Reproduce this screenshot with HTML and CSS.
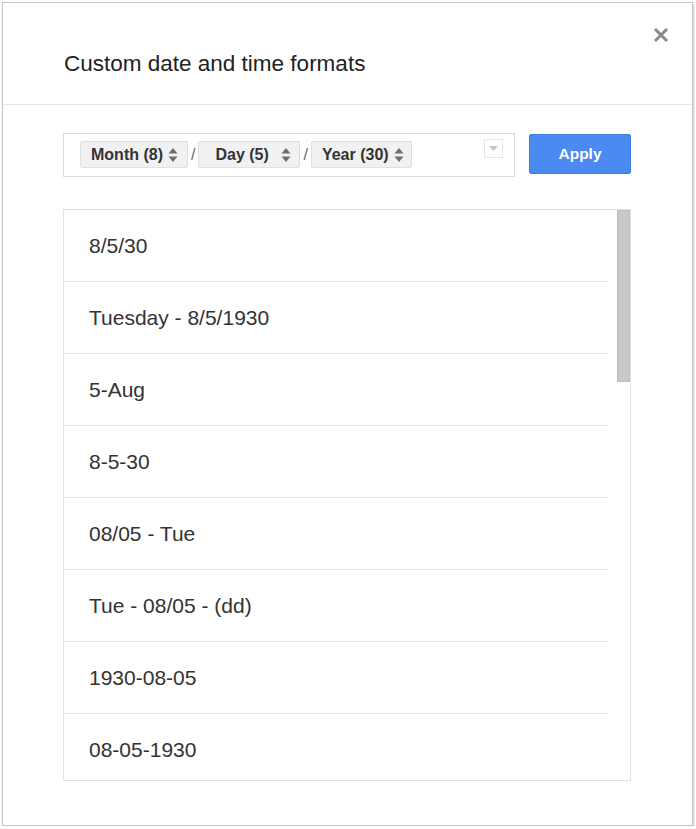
FILE: index.html
```html
<!DOCTYPE html>
<html lang="en">
<head>
<meta charset="utf-8">
<title>Custom date and time formats</title>
<link rel="stylesheet" href="styles.css">
</head>
<body>
<div class="dialog">
  <div class="header">
    <h1 class="title">Custom date and time formats</h1>
    <button class="close" aria-label="Close">
      <svg width="16" height="16" viewBox="0 0 16 16"><path d="M2 2 L14 14 M14 2 L2 14" stroke="#8a8a8a" stroke-width="3" stroke-linecap="butt"/></svg>
    </button>
  </div>
  <div class="content">
    <div class="format-row">
      <div class="format-input">
        <div class="chips">
          <span class="chip chip-month">Month (8)<svg class="spin" width="10" height="16" viewBox="0 0 10 16"><path d="M5 1 L9.5 6.5 L0.5 6.5 Z M0.5 9.5 L9.5 9.5 L5 15 Z" fill="#6e6e6e"/></svg></span>
          <span class="sep">/</span>
          <span class="chip chip-day">Day (5)<svg class="spin" width="10" height="16" viewBox="0 0 10 16"><path d="M5 1 L9.5 6.5 L0.5 6.5 Z M0.5 9.5 L9.5 9.5 L5 15 Z" fill="#6e6e6e"/></svg></span>
          <span class="sep">/</span>
          <span class="chip chip-year">Year (30)<svg class="spin" width="10" height="16" viewBox="0 0 10 16"><path d="M5 1 L9.5 6.5 L0.5 6.5 Z M0.5 9.5 L9.5 9.5 L5 15 Z" fill="#6e6e6e"/></svg></span>
        </div>
        <span class="drop">
          <svg width="9" height="5" viewBox="0 0 9 5"><path d="M0 0 L9 0 L4.5 5 Z" fill="#c4c4c4"/></svg>
        </span>
      </div>
      <button class="apply">Apply</button>
    </div>
    <div class="list">
      <div class="items">
        <div class="item">8/5/30</div>
        <div class="item">Tuesday - 8/5/1930</div>
        <div class="item">5-Aug</div>
        <div class="item">8-5-30</div>
        <div class="item">08/05 - Tue</div>
        <div class="item">Tue - 08/05 - (dd)</div>
        <div class="item">1930-08-05</div>
        <div class="item">08-05-1930</div>
      </div>
      <div class="scrollbar"><div class="thumb"></div></div>
    </div>
  </div>
</div>
</body>
</html>
```
FILE: styles.css
```css
html, body {
  margin: 0;
  padding: 0;
  background: #ffffff;
}
body {
  padding: 2px 3px 0 2px;
  font-family: "Liberation Sans", Arial, sans-serif;
}
.dialog {
  width: 691px;
  height: 824px;
  box-sizing: border-box;
  border: 1px solid #c4c4c4;
  background: #fff;
  box-shadow: 1px 2px 2px rgba(0,0,0,0.22);
  display: flex;
  flex-direction: column;
}
.header {
  height: 102px;
  box-sizing: border-box;
  border-bottom: 1px solid #e6e6e6;
  display: flex;
  justify-content: space-between;
  align-items: flex-start;
  padding: 24px 23px 0 61px;
}
.title {
  margin: 24px 0 0 0;
  font-size: 22.5px;
  line-height: 26px;
  font-weight: normal;
  color: #222;
}
.close {
  border: 0;
  background: none;
  padding: 0;
  width: 16px;
  height: 16px;
  display: block;
}
.close svg { display: block; }
.content {
  padding: 28px 0 0 60px;
}
.format-row {
  display: flex;
  align-items: flex-start;
  gap: 14px;
}
.format-input {
  width: 452px;
  height: 44px;
  box-sizing: border-box;
  border: 1px solid #dadada;
  display: flex;
  justify-content: space-between;
  align-items: flex-start;
  padding: 0 11px 0 16px;
}
.chips {
  display: flex;
  align-items: center;
  margin-top: 7px;
}
.chip {
  height: 27px;
  box-sizing: border-box;
  background: #f1f1f1;
  border: 1px solid #e0e0e0;
  border-radius: 2px;
  display: flex;
  align-items: center;
  font-size: 16px;
  font-weight: bold;
  color: #333;
  white-space: nowrap;
}
.spin { display: block; margin-left: 5px; }
.chip-month { width: 108px; padding-left: 10px; }
.chip-day { width: 102px; padding-left: 16px; justify-content: space-between; padding-right: 8px; }
.chip-year { width: 101px; padding-left: 10px; }
.sep {
  font-size: 16px;
  color: #666;
  margin: 0 3px 0 3px;
  line-height: 1;
}
.drop {
  margin-top: 5px;
  width: 19px;
  height: 19px;
  box-sizing: border-box;
  border: 1px solid #e6e6e6;
  display: flex;
  align-items: center;
  justify-content: center;
}
.drop svg { display: block; }
.apply {
  margin-top: 1px;
  width: 102px;
  height: 40px;
  box-sizing: border-box;
  background: #4a8af1;
  border: 1px solid #3f7fe6;
  border-radius: 2px;
  color: #fff;
  font-family: "Liberation Sans", Arial, sans-serif;
  font-size: 15.5px;
  font-weight: bold;
  padding: 0;
}
.list {
  margin-top: 32px;
  width: 568px;
  height: 572px;
  box-sizing: border-box;
  border: 1px solid #e2e2e2;
  display: grid;
  grid-template-columns: 1fr 22px;
  overflow: hidden;
}
.items {
  display: flex;
  flex-direction: column;
  margin-left: 1px;
}
.item {
  flex: none;
  height: 71px;
  border-bottom: 1px solid #e6e6e6;
  display: flex;
  align-items: center;
  padding-left: 24px;
  font-size: 21px;
  color: #333;
}
.scrollbar {
  display: flex;
  justify-content: flex-end;
  align-items: flex-start;
}
.thumb {
  width: 13px;
  height: 172px;
  box-sizing: border-box;
  background: #c8c8c8;
  border: 1px solid #bdbdbd;
}
```
